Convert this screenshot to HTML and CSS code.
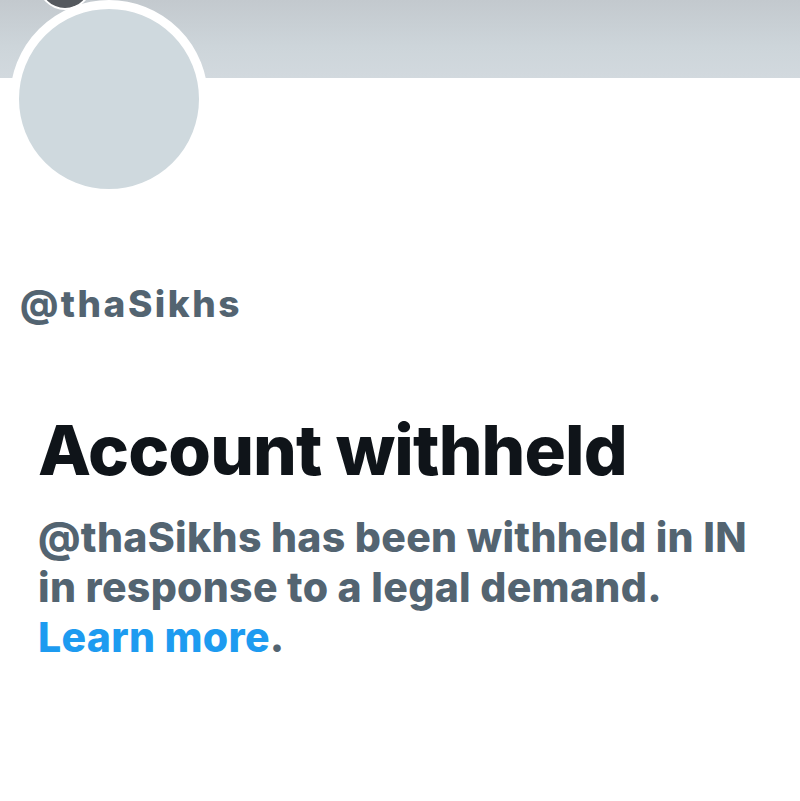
FILE: index.html
```html
<!DOCTYPE html>
<html lang="en">
<head>
<meta charset="utf-8">
<title>Account withheld</title>
<link rel="stylesheet" href="styles.css">
</head>
<body>
<div class="page">
  <div class="banner">
    <div class="back-btn"></div>
  </div>
  <div class="avatar"></div>
  <div class="handle">@thaSikhs</div>
  <div class="notice">
    <h1 class="title">Account withheld</h1>
    <p class="message">@thaSikhs has been withheld in IN in response to a legal demand. <a class="link" href="#">Learn more</a>.</p>
  </div>
</div>
</body>
</html>
```
FILE: styles.css
```css
html, body {
  margin: 0;
  padding: 0;
  background: #ffffff;
}
.page {
  width: 800px;
  height: 801px;
  overflow: hidden;
  font-family: Inter, "Liberation Sans", sans-serif;
}
.banner {
  position: relative;
  height: 78px;
  background: linear-gradient(to bottom, #c3c9ce 0%, #cdd5da 60%, #d2d9de 100%);
  overflow: hidden;
}
.back-btn {
  position: absolute;
  left: 40px;
  top: -42px;
  width: 50px;
  height: 50px;
  border-radius: 50%;
  background: #55595e;
  box-shadow: 0 0 0 2px #ffffff;
}
.avatar {
  margin-top: -78px;
  margin-left: 10px;
  width: 198px;
  height: 198px;
  box-sizing: border-box;
  border: 9px solid #ffffff;
  border-radius: 50%;
  background: #cfd9de;
  position: relative;
}
.handle {
  margin: 86px 0 0 20px;
  font-size: 37px;
  line-height: 40px;
  font-weight: 800;
  letter-spacing: 2.5px;
  color: #536471;
}
.notice {
  padding: 0 38px;
}
.title {
  margin: 86px 0 0 0;
  font-size: 69px;
  line-height: 80px;
  font-weight: 800;
  color: #0f1419;
  letter-spacing: -0.9px;
}
.message {
  margin: 22px 0 0 0;
  max-width: 750px;
  font-size: 41px;
  line-height: 50px;
  font-weight: 800;
  letter-spacing: 0.3px;
  color: #536471;
}
.link {
  color: #1d9bf0;
  text-decoration: none;
}
```
